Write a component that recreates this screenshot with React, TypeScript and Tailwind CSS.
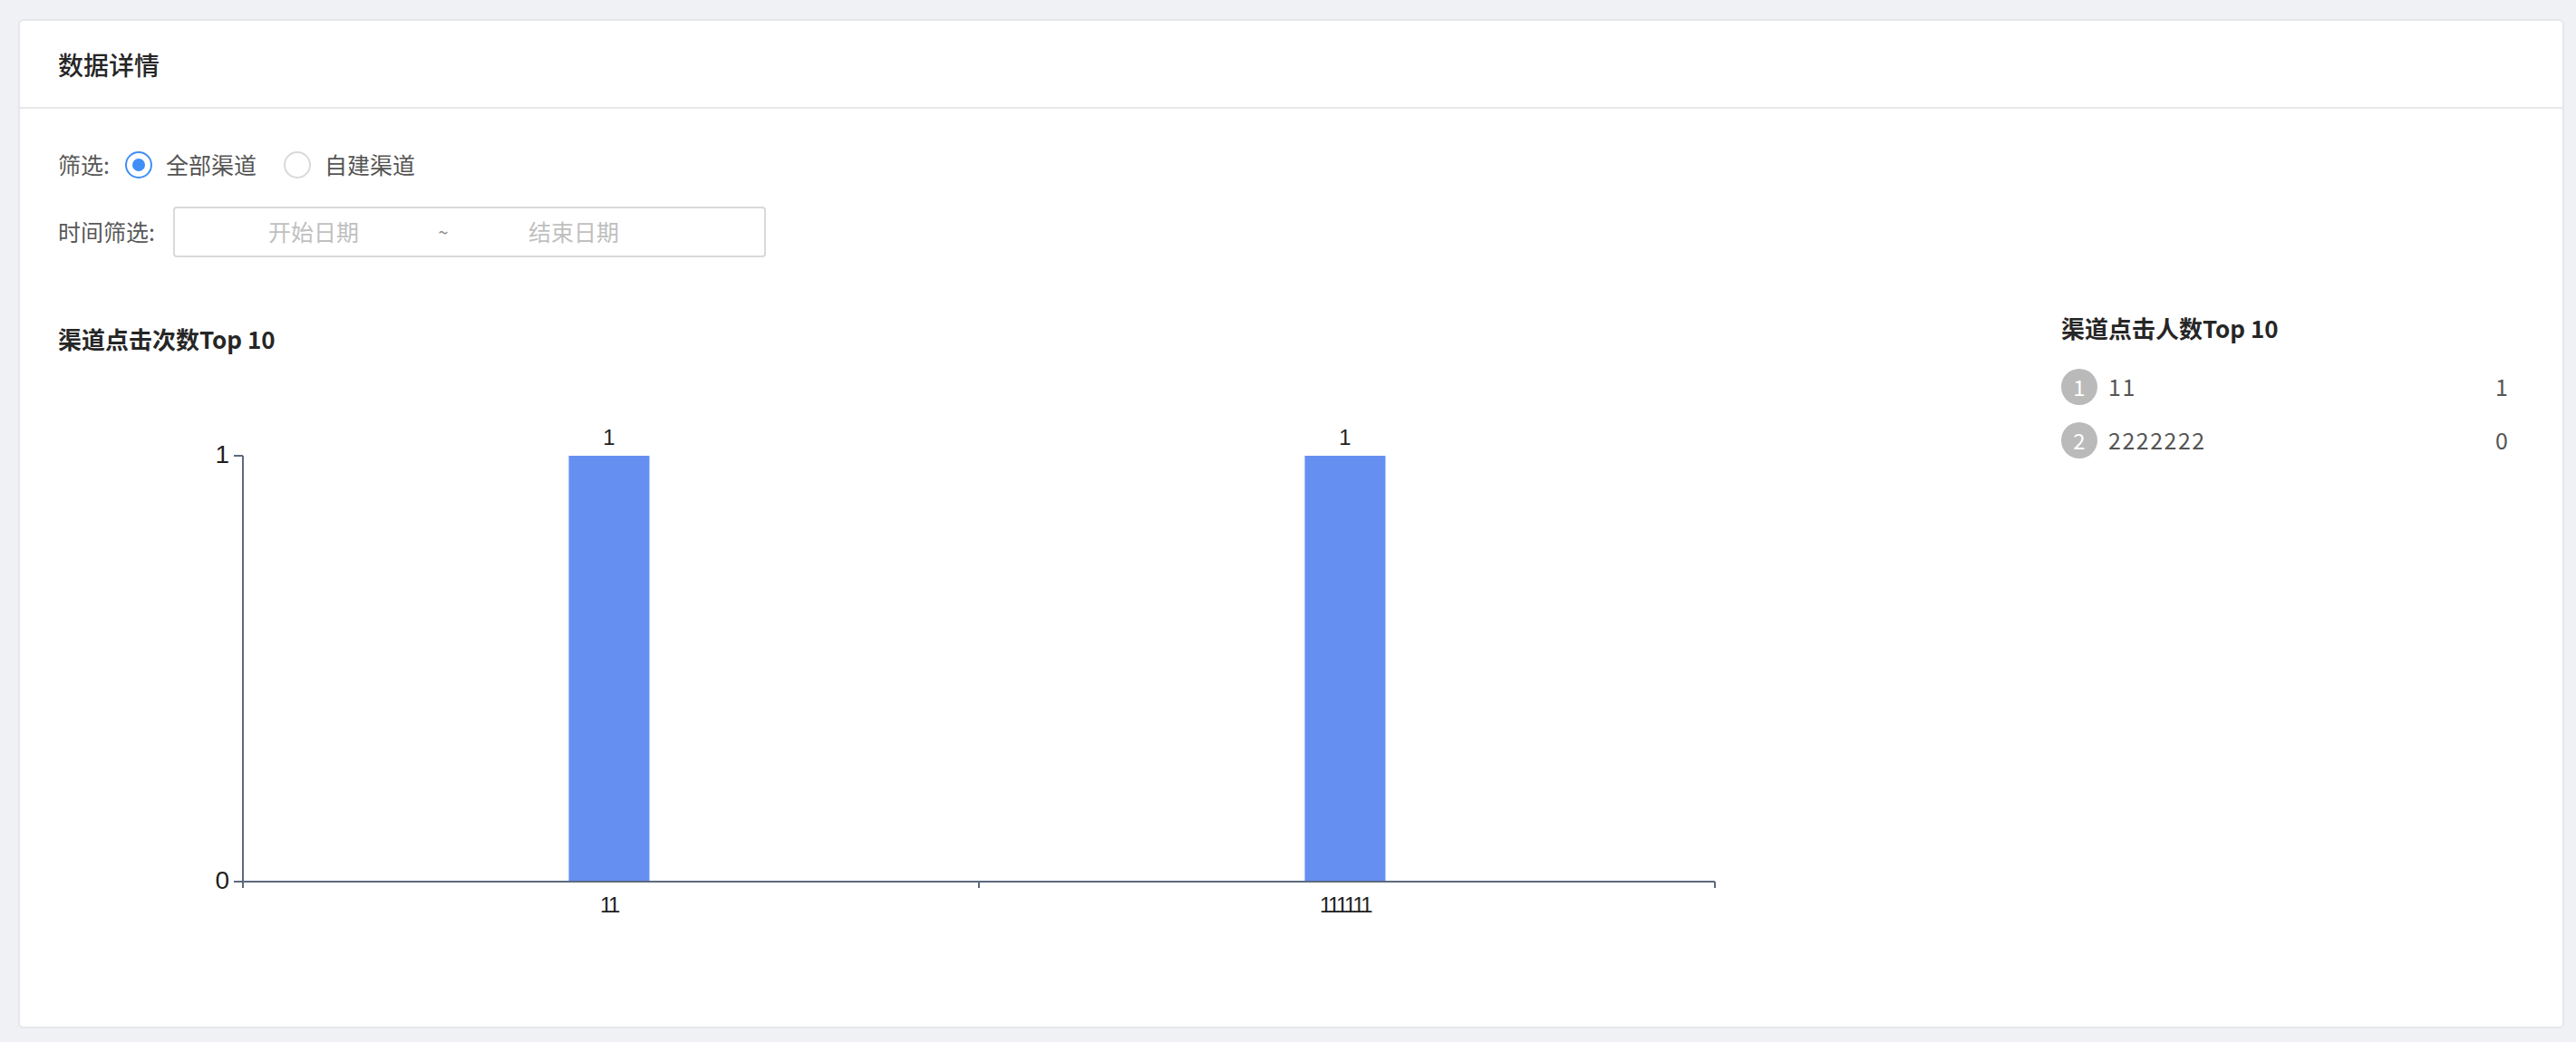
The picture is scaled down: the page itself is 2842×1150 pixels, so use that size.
import React from 'react';

const CJK = { fontFamily: '"Noto Sans CJK SC", "Noto Sans", sans-serif' };

const clickCounts = [
  { name: '11', value: 1 },
  { name: '111111', value: 1 },
];

const visitorRank = [
  { name: '11', value: 1 },
  { name: '2222222', value: 0 },
];

const Radio: React.FC<{ checked?: boolean; label: string }> = ({ checked, label }) => (
  <label className="flex items-center cursor-pointer">
    <span
      className={`w-[30px] h-[30px] rounded-full border-2 flex items-center justify-center bg-white ${
        checked ? 'border-[#3f8ff7]' : 'border-[#d9d9d9]'
      }`}
    >
      {checked && <span className="w-[14px] h-[14px] rounded-full bg-[#3f8ff7]" />}
    </span>
    <span className="ml-[15px] text-[25px] text-[#545454]">{label}</span>
  </label>
);

// bar chart drawn as svg, origin = page x 64
const ClickChart: React.FC = () => {
  const axis = '#5b6a7f';
  const x0 = 204;
  const x1 = 1828;
  const top = 106;
  const base = 576;
  const slot = (x1 - x0) / clickCounts.length;
  const barW = 89;
  const font = 'Liberation Sans, Arial, sans-serif';
  return (
    <svg width="1860" height="640" className="block">
      <line x1={x0} y1={top} x2={x0} y2={base + 7} stroke={axis} strokeWidth="2" />
      <line x1={x0 - 10} y1={top} x2={x0} y2={top} stroke={axis} strokeWidth="2" />
      <line x1={x0 - 10} y1={base} x2={x1} y2={base} stroke={axis} strokeWidth="2" />
      {[0, 1, 2].map((i) => (
        <line key={i} x1={x0 + slot * i} y1={base} x2={x0 + slot * i} y2={base + 7} stroke={axis} strokeWidth="2" />
      ))}
      <text x={189} y={114} textAnchor="end" fontFamily={font} fontSize="28" fill="#1f1f1f">1</text>
      <text x={189} y={584} textAnchor="end" fontFamily={font} fontSize="28" fill="#1f1f1f">0</text>
      {clickCounts.map((d, i) => {
        const cx = x0 + slot * i + slot / 2 - 2;
        return (
          <g key={d.name}>
            <rect x={cx - barW / 2} y={top} width={barW} height={base - top - 1} fill="#6590f2" />
            <text x={cx} y={94} textAnchor="middle" fontFamily={font} fontSize="24" fill="#1f1f1f">
              {d.value}
            </text>
            <text x={cx} y={610} textAnchor="middle" fontFamily={font} fontSize="24" letterSpacing="-2.5" fill="#1f1f1f">
              {d.name}
            </text>
          </g>
        );
      })}
    </svg>
  );
};

const App: React.FC = () => {
  return (
    <div className="min-h-screen bg-[#f0f1f5] pt-[21px] pl-[20px] pr-[13px]" style={CJK}>
      <div className="h-[1114px] bg-white border-2 border-[#e6e7ea] rounded-[6px] flex flex-col">
        <div className="h-[97px] flex items-center px-[42px] border-b-2 border-[#e8e8e8] shrink-0">
          <h2 className="text-[28px] font-medium text-[#262626]">数据详情</h2>
        </div>

        <div className="px-[42px] pt-[40px]">
          <div className="h-[44px] flex items-center">
            <span className="text-[25px] text-[#595959] w-[59px]">筛选:</span>
            <div className="flex items-center gap-[30px] ml-[15px]">
              <Radio checked label="全部渠道" />
              <Radio label="自建渠道" />
            </div>
          </div>

          <div className="flex items-center mt-[24px]">
            <span className="text-[25px] text-[#595959] w-[111px]">时间筛选:</span>
            <div className="ml-[16px] w-[654px] h-[56px] border-2 border-[#d9d9d9] rounded-[4px] flex items-center pl-[17px]">
              <span className="w-[272px] text-center text-[25px] text-[#bfbfbf]">开始日期</span>
              <span className="w-[14px] text-center text-[20px] text-[#8c8c8c]">~</span>
              <span className="w-[274px] text-center text-[25px] text-[#bfbfbf]">结束日期</span>
            </div>
          </div>

          <div className="flex items-start mt-[55px]">
            <div className="flex-1 pt-[12px]">
              <h3 className="text-[26px] leading-[46px] font-semibold text-[#262626]">渠道点击次数Top 10</h3>
              <ClickChart />
            </div>

            <div className="w-[511px] pr-[18px]">
              <h3 className="text-[26px] leading-[46px] font-semibold text-[#262626]">渠道点击人数Top 10</h3>
              <ul className="mt-[22px] flex flex-col gap-[19px]">
                {visitorRank.map((r, i) => (
                  <li key={r.name} className="h-[40px] flex items-center">
                    <span className="w-[40px] h-[40px] rounded-full bg-[#bababa] text-white text-[24px] flex items-center justify-center">
                      {i + 1}
                    </span>
                    <span className="ml-[12px] flex-1 text-[25px] tracking-[1.5px] text-[#555555]">{r.name}</span>
                    <span className="text-[25px] text-[#555555]">{r.value}</span>
                  </li>
                ))}
              </ul>
            </div>
          </div>
        </div>
      </div>
    </div>
  );
};

export default App;
